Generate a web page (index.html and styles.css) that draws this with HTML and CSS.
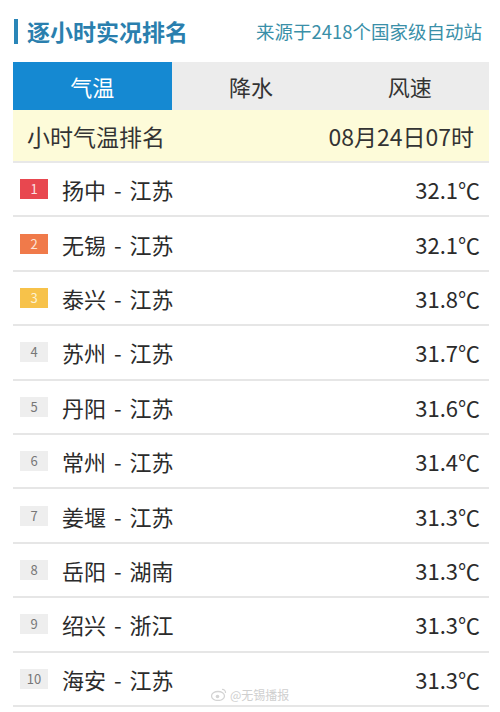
FILE: index.html
```html
<!DOCTYPE html>
<html lang="zh">
<head>
  <meta charset="UTF-8">
  <title>逐小时实况排名</title>
  <link rel="stylesheet" href="styles.css">
</head>
<body>
  <div class="head">
    <div class="title">逐小时实况排名</div>
    <div class="source">来源于2418个国家级自动站</div>
  </div>
  <div class="panel">
    <div class="tabs">
      <div class="tab active">气温</div>
      <div class="tab">降水</div>
      <div class="tab">风速</div>
    </div>
    <div class="sub">
      <span>小时气温排名</span>
      <span>08月24日07时</span>
    </div>
    <div class="list">
      <div class="row"><span class="rank r1">1</span><span class="name">扬中 - 江苏</span><span class="val">32.1℃</span></div>
      <div class="row"><span class="rank r2">2</span><span class="name">无锡 - 江苏</span><span class="val">32.1℃</span></div>
      <div class="row"><span class="rank r3">3</span><span class="name">泰兴 - 江苏</span><span class="val">31.8℃</span></div>
      <div class="row"><span class="rank">4</span><span class="name">苏州 - 江苏</span><span class="val">31.7℃</span></div>
      <div class="row"><span class="rank">5</span><span class="name">丹阳 - 江苏</span><span class="val">31.6℃</span></div>
      <div class="row"><span class="rank">6</span><span class="name">常州 - 江苏</span><span class="val">31.4℃</span></div>
      <div class="row"><span class="rank">7</span><span class="name">姜堰 - 江苏</span><span class="val">31.3℃</span></div>
      <div class="row"><span class="rank">8</span><span class="name">岳阳 - 湖南</span><span class="val">31.3℃</span></div>
      <div class="row"><span class="rank">9</span><span class="name">绍兴 - 浙江</span><span class="val">31.3℃</span></div>
      <div class="row"><span class="rank">10</span><span class="name">海安 - 江苏</span><span class="val">31.3℃</span></div>
    </div>
  </div>
  <div class="mark">
    <svg width="16" height="13" viewBox="0 0 16 13"><ellipse cx="7" cy="8" rx="6.5" ry="4.5" fill="none" stroke="#d4d4d4" stroke-width="1.3"/><circle cx="6.5" cy="8.5" r="1.8" fill="#d4d4d4"/><path d="M11 1.5a3 3 0 0 1 3.5 3.5" fill="none" stroke="#d4d4d4" stroke-width="1.2"/></svg>
    <span>@无锡播报</span>
  </div>
</body>
</html>
```

FILE: styles.css
```css
body {
  margin: 0;
  background-color: #ffffff;
  font-family: "Noto Sans CJK SC", "Noto Sans", sans-serif;
  color: #333333;
  position: relative;
  height: 712px;
  overflow: hidden;
}
.head {
  display: flex;
  justify-content: space-between;
  align-items: center;
  height: 62px;
  padding: 0 18px 0 14px;
}
.title {
  border-left: 4px solid #2a86b8;
  padding-left: 9px;
  font-size: 23px;
  font-weight: bold;
  line-height: 25px;
  color: #2a7fae;
}
.source {
  font-size: 18.5px;
  color: #3a8fa8;
}
.panel {
  margin: 0 11px 0 13px;
}
.tabs {
  display: flex;
  height: 48px;
  background-color: #ececec;
}
.tab {
  flex: 1;
  display: flex;
  align-items: center;
  justify-content: center;
  font-size: 22px;
  color: #333333;
}
.tab.active {
  background-color: #1589d2;
  color: #ffffff;
}
.sub {
  display: flex;
  justify-content: space-between;
  align-items: center;
  height: 51px;
  padding: 0 15px 0 14px;
  background-color: #fdfbd9;
  font-size: 23px;
  color: #333333;
  border-bottom: 2px solid #e8e8e8;
}
.row {
  display: flex;
  align-items: center;
  height: 52.4px;
  border-bottom: 2px solid #e6e6e6;
  padding: 0 9px 0 7px;
}
.rank {
  width: 28px;
  height: 20px;
  background-color: #eeeeee;
  color: #777777;
  font-size: 13px;
  line-height: 20px;
  text-align: center;
  margin-right: 14px;
}
.rank.r1 { background-color: #e8474f; color: #fce2e2; }
.rank.r2 { background-color: #f07a4a; color: #fde3d6; }
.rank.r3 { background-color: #f7c24a; color: #fdf1d2; }
.name {
  flex: 1;
  font-size: 22px;
  word-spacing: 3px;
  color: #2b2b2b;
}
.val {
  font-size: 22px;
  color: #2b2b2b;
}
.mark {
  position: absolute;
  left: 211px;
  top: 686px;
  display: flex;
  align-items: center;
  gap: 3px;
  font-size: 12px;
  color: #cfcfcf;
}
```
